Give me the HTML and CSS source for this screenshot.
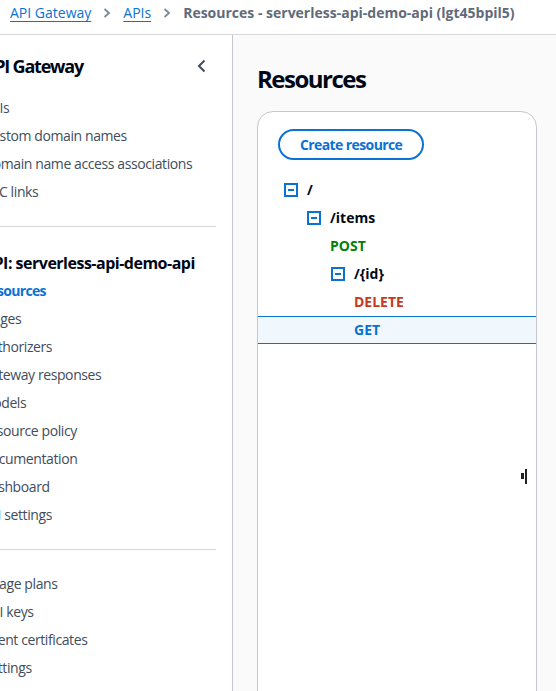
FILE: index.html
```html
<!DOCTYPE html>
<html lang="en">
<head>
<meta charset="utf-8">
<title>Resources - serverless-api-demo-api</title>
<link rel="stylesheet" href="styles.css">
</head>
<body>
<header class="crumbs">
  <a class="crumb-link" href="#">API Gateway</a>
  <svg class="crumb-sep" width="8" height="10" viewBox="0 0 8 10"><path d="M1.5 1 L6 5 L1.5 9" fill="none" stroke="#7d8998" stroke-width="1.8"/></svg>
  <a class="crumb-link" href="#">APIs</a>
  <svg class="crumb-sep" width="8" height="10" viewBox="0 0 8 10"><path d="M1.5 1 L6 5 L1.5 9" fill="none" stroke="#7d8998" stroke-width="1.8"/></svg>
  <span class="crumb-current">Resources - serverless-api-demo-api (lgt45bpil5)</span>
</header>
<div class="layout">
  <nav class="sidebar">
    <div class="side-inner">
      <div class="side-head">
        <h2 class="side-title">API Gateway</h2>
        <svg class="side-close" width="16" height="16" viewBox="0 0 16 16"><path d="M10.5 2.5 L5 8 L10.5 13.5" fill="none" stroke="#414d5c" stroke-width="2"/></svg>
      </div>
      <ul class="nav">
        <li>APIs</li>
        <li>Custom domain names</li>
        <li>Domain name access associations</li>
        <li>VPC links</li>
      </ul>
      <hr class="divider">
      <h3 class="group-title">API: serverless-api-demo-api</h3>
      <ul class="nav nav-api">
        <li class="active">Resources</li>
        <li>Stages</li>
        <li>Authorizers</li>
        <li>Gateway responses</li>
        <li>Models</li>
        <li>Resource policy</li>
        <li>Documentation</li>
        <li>Dashboard</li>
        <li>API settings</li>
      </ul>
      <hr class="divider">
      <ul class="nav">
        <li>Usage plans</li>
        <li>API keys</li>
        <li>Client certificates</li>
        <li>Settings</li>
      </ul>
    </div>
  </nav>
  <main class="main">
    <h1 class="page-title">Resources</h1>
    <section class="card">
      <button class="btn">Create resource</button>
      <ul class="tree">
        <li class="row lv0"><svg class="toggle" width="14" height="14" viewBox="0 0 14 14"><rect x="1" y="1" width="12" height="12" fill="none" stroke="#0972d3" stroke-width="2"/><path d="M4 7 H10" stroke="#0972d3" stroke-width="2"/></svg><span class="path">/</span></li>
        <li class="row lv1"><svg class="toggle" width="14" height="14" viewBox="0 0 14 14"><rect x="1" y="1" width="12" height="12" fill="none" stroke="#0972d3" stroke-width="2"/><path d="M4 7 H10" stroke="#0972d3" stroke-width="2"/></svg><span class="path">/items</span></li>
        <li class="row m1"><span class="method post">POST</span></li>
        <li class="row lv2"><svg class="toggle" width="14" height="14" viewBox="0 0 14 14"><rect x="1" y="1" width="12" height="12" fill="none" stroke="#0972d3" stroke-width="2"/><path d="M4 7 H10" stroke="#0972d3" stroke-width="2"/></svg><span class="path">/{id}</span></li>
        <li class="row m2"><span class="method delete">DELETE</span></li>
        <li class="row m2 selected"><span class="method get">GET</span></li>
      </ul>
    </section>
  </main>
</div>
<div class="cursor"><span class="cursor-a"></span><span class="cursor-b"></span></div>
</body>
</html>
```

FILE: styles.css
```css
* {
  box-sizing: border-box;
  margin: 0;
  padding: 0;
}

html, body {
  width: 556px;
  height: 691px;
  overflow: hidden;
}

body {
  font-family: "Open Sans", "Noto Sans", sans-serif;
  font-size: 14px;
  line-height: 20px;
  color: #000716;
  background: #fafafa;
  position: relative;
}

.crumbs {
  height: 35px;
  background: #ffffff;
  border-bottom: 1px solid #d5d7da;
  display: flex;
  align-items: flex-start;
  padding: 3px 0 0 10px;
  gap: 12px;
  white-space: nowrap;
}

.crumb-link {
  color: #0972d3;
  text-decoration: underline;
  text-underline-offset: 3px;
  text-decoration-thickness: 1px;
}

.crumb-sep {
  margin-top: 5px;
}

.crumb-current {
  color: #5f6b7a;
  font-weight: 700;
}

.layout {
  display: flex;
  height: 656px;
}

.sidebar {
  width: 233px;
  flex: none;
  background: #ffffff;
  border-right: 1px solid #c6c6cd;
  overflow: hidden;
}

.side-inner {
  margin-left: -17px;
  padding: 17px 16px 0 0;
  width: 249px;
}

.side-head {
  display: flex;
  align-items: center;
  justify-content: space-between;
  height: 28px;
  margin-bottom: 14px;
}

.side-title {
  font-size: 18px;
  line-height: 28px;
  font-weight: 700;
  letter-spacing: -1.2px;
  color: #000716;
}

.side-close {
  margin-right: 6px;
}

.nav {
  list-style: none;
}

.nav li {
  padding: 4px 0;
  line-height: 20px;
  color: #414d5c;
  white-space: nowrap;
  letter-spacing: -0.4px;
}

.nav-api {
  margin-left: -2px;
}

.nav li.active {
  color: #0972d3;
  font-weight: 700;
  letter-spacing: -0.7px;
}

.divider {
  border: none;
  border-top: 1px solid #d5d7da;
  margin: 20px 0;
}

.group-title {
  font-size: 16px;
  line-height: 28px;
  font-weight: 700;
  letter-spacing: -0.5px;
  color: #000716;
  margin-top: 22px;
  white-space: nowrap;
}

.main {
  flex: 1;
  padding: 29px 19px 0 24px;
  background: #fafafa;
  overflow: hidden;
}

.page-title {
  font-size: 24px;
  line-height: 30px;
  font-weight: 700;
  letter-spacing: -1.5px;
  color: #000716;
  margin-bottom: 17px;
}

.card {
  background: #ffffff;
  border: 1px solid #c6c6cd;
  border-radius: 16px;
  padding-top: 17px;
  height: 700px;
}

.btn {
  margin-left: 20px;
  height: 31px;
  padding: 0 20px;
  border: 2px solid #0972d3;
  border-radius: 16px;
  background: #ffffff;
  color: #0972d3;
  font-family: inherit;
  font-size: 14px;
  font-weight: 700;
  letter-spacing: -0.6px;
  line-height: 20px;
}

.tree {
  list-style: none;
  margin-top: 16px;
}

.row {
  height: 28px;
  display: flex;
  align-items: center;
  font-weight: 700;
}

.toggle {
  margin-right: 9px;
  flex: none;
}

.path {
  color: #000716;
}

.lv0 { padding-left: 26px; }
.lv1 { padding-left: 49px; }
.lv2 { padding-left: 73px; }
.m1 { padding-left: 72px; }
.m2 { padding-left: 96px; }

.method.post { color: #037f0c; }
.method.delete { color: #c53a1b; }
.method.get { color: #0972d3; }

.row.selected {
  background: #f0f8fe;
  border-top: 1px solid #0972d3;
  border-bottom: 1px solid #0972d3;
}

.cursor {
  position: absolute;
  left: 521px;
  top: 469px;
  width: 7px;
  height: 15px;
}

.cursor-a {
  position: absolute;
  left: 0;
  top: 4px;
  width: 3px;
  height: 6px;
  background: #222;
}

.cursor-b {
  position: absolute;
  left: 4px;
  top: 0;
  width: 2px;
  height: 15px;
  background: #222;
}
```
